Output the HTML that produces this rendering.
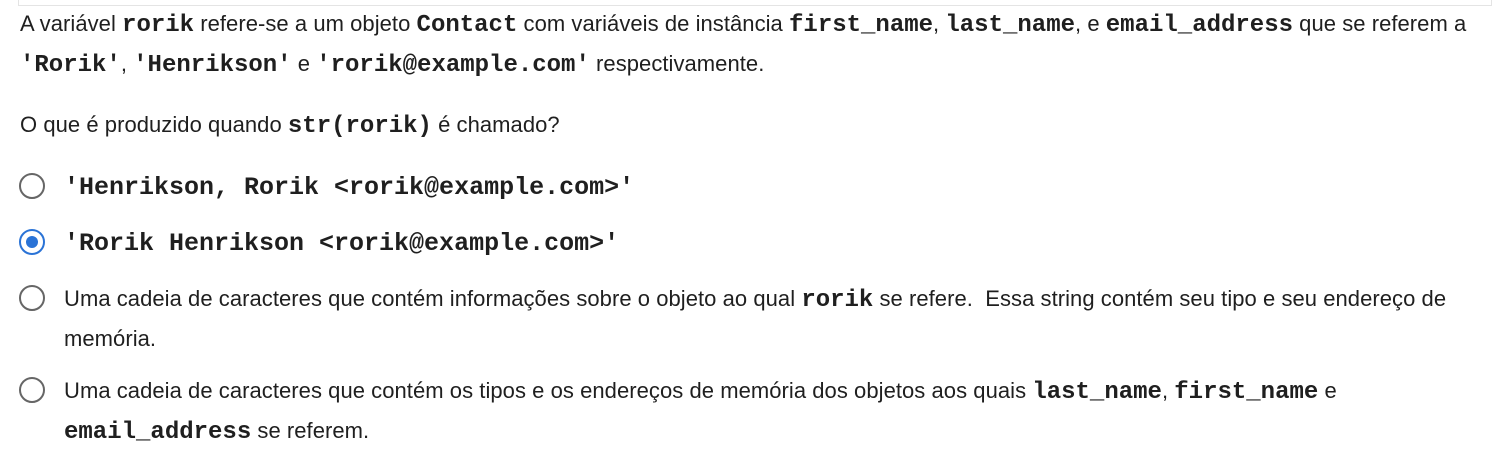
<!DOCTYPE html>
<html><head><style>
body{margin:0;width:1495px;height:459px;background:#fff;font-family:"Liberation Sans",sans-serif;font-size:22px;color:#1f1f1f;position:relative;overflow:hidden}
.box{position:absolute;left:18px;top:-2px;width:1472px;height:7px;border:1px solid #e4e4e4;border-top:none}
code{font-family:"Liberation Mono",monospace;font-size:24px;font-weight:bold;color:#1f1f1f;letter-spacing:0}
.p{position:absolute;left:20px;line-height:38px;white-space:nowrap;letter-spacing:0.05px}
.opt{position:absolute;left:64px;line-height:38px;white-space:nowrap;letter-spacing:0.05px}
.r{position:absolute;left:19px;width:22px;height:22px;border:2.5px solid #666;border-radius:50%;box-sizing:content-box}
.r.on{border-color:#2a73d6}
.r.on::after{content:"";position:absolute;left:5px;top:5px;width:12px;height:12px;border-radius:50%;background:#2a73d6}
.big{font-size:25px}
</style></head><body>
<div class="box"></div>
<div class="p" style="top:5px">A variável <code>rorik</code> refere-se a um objeto <code>Contact</code> com variáveis de instância <code>first_name</code>, <code>last_name</code>, e <code>email_address</code> que se referem a<br><code>'Rorik'</code>, <code>'Henrikson'</code> e <code>'rorik@example.com'</code> respectivamente.</div>
<div class="p" style="top:106px">O que é produzido quando <code>str(rorik)</code> é chamado?</div>
<div class="r" style="top:173px"></div>
<div class="opt" style="top:168px"><code class="big">'Henrikson, Rorik &lt;rorik@example.com&gt;'</code></div>
<div class="r on" style="top:229px"></div>
<div class="opt" style="top:224px"><code class="big">'Rorik Henrikson &lt;rorik@example.com&gt;'</code></div>
<div class="r" style="top:285px"></div>
<div class="opt" style="top:280px">Uma cadeia de caracteres que contém informações sobre o objeto ao qual <code>rorik</code> se refere.&nbsp; Essa string contém seu tipo e seu endereço de<br>memória.</div>
<div class="r" style="top:377px"></div>
<div class="opt" style="top:372px">Uma cadeia de caracteres que contém os tipos e os endereços de memória dos objetos aos quais <code>last_name</code>, <code>first_name</code> e<br><code>email_address</code> se referem.</div>
</body></html>
